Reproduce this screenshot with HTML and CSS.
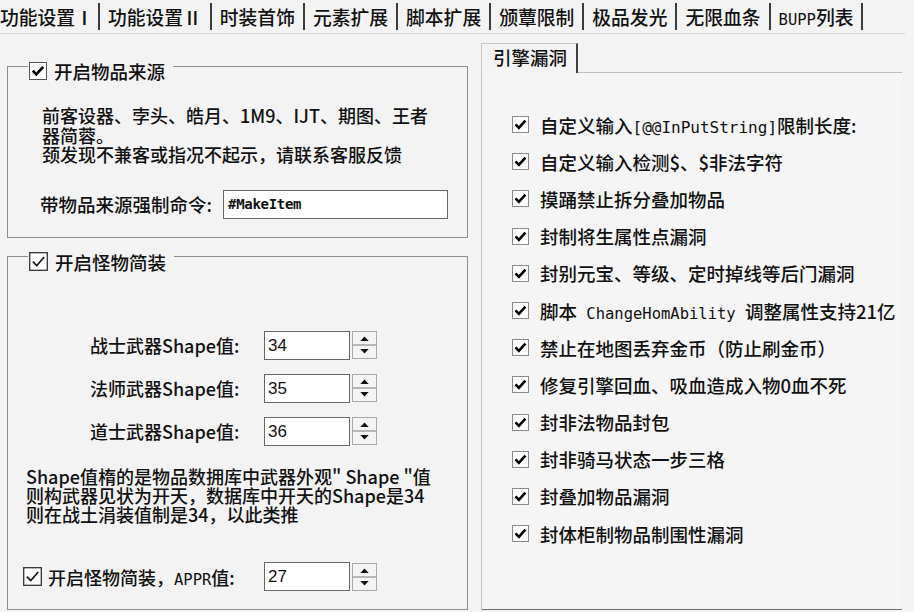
FILE: index.html
```html
<!DOCTYPE html>
<html lang="zh-CN">
<head>
<meta charset="utf-8">
<title>功能设置</title>
<link rel="stylesheet" href="styles.css">
</head>
<body>
<div class="tabs">
  <div class="tab first">功能设置Ⅰ</div>
  <div class="tab">功能设置Ⅱ</div>
  <div class="tab">时装首饰</div>
  <div class="tab">元素扩展</div>
  <div class="tab">脚本扩展</div>
  <div class="tab">颁蕈限制</div>
  <div class="tab">极品发光</div>
  <div class="tab">无限血条</div>
  <div class="tab"><span class="mono tabmono">BUPP</span>列表</div>
</div>

<div class="main">
  <div class="left">
    <fieldset class="group g1">
      <legend><span class="legend-in">
        <svg class="cb" width="18" height="18" viewBox="0 0 18 18"><rect x="0.5" y="0.5" width="17" height="17" fill="#fff" stroke="#555"/><path d="M3.8 8.8 L7.3 12.4 L14.2 4.8" fill="none" stroke="#000" stroke-width="2.7"/></svg>
        开启物品来源</span></legend>
      <div class="body">
        <p class="note">前客设器、孛头、皓月、1M9、IJT、期图、王者<br>器简蓉。<br>颈发现不兼客或指况不起示，请联系客服反馈</p>
        <div class="cmd-row">
          <span class="cmd-label">带物品来源强制命令:</span>
          <div class="field wide">#MakeItem</div>
        </div>
      </div>
    </fieldset>

    <fieldset class="group g2">
      <legend><span class="legend-in">
        <svg class="cb" width="19" height="19" viewBox="0 0 19 19"><rect x="0.7" y="0.7" width="17.6" height="17.6" fill="#fff" stroke="#333" stroke-width="1.3"/><path d="M3.8 9.6 L7.8 13.6 L15.2 5" fill="none" stroke="#111" stroke-width="1.6"/></svg>
        开启怪物简装</span></legend>
      <div class="body">
        <div class="shape-rows">
          <span class="lbl">战士武器Shape值:</span>
          <div class="spin-field">
            <div class="field num">34</div>
            <svg class="spin" width="25" height="28" viewBox="0 0 25 28"><rect x="0.5" y="0.5" width="24" height="27" fill="#f4f4f4" stroke="#a9a9a9"/><line x1="1" y1="14" x2="24" y2="14" stroke="#7a7a7a"/><path d="M8.3 10 L12.5 5.5 L16.7 10 Z" fill="#111"/><path d="M8.3 18 L12.5 22.5 L16.7 18 Z" fill="#111"/></svg>
          </div>
          <span class="lbl">法师武器Shape值:</span>
          <div class="spin-field">
            <div class="field num">35</div>
            <svg class="spin" width="25" height="28" viewBox="0 0 25 28"><rect x="0.5" y="0.5" width="24" height="27" fill="#f4f4f4" stroke="#a9a9a9"/><line x1="1" y1="14" x2="24" y2="14" stroke="#7a7a7a"/><path d="M8.3 10 L12.5 5.5 L16.7 10 Z" fill="#111"/><path d="M8.3 18 L12.5 22.5 L16.7 18 Z" fill="#111"/></svg>
          </div>
          <span class="lbl">道士武器Shape值:</span>
          <div class="spin-field">
            <div class="field num">36</div>
            <svg class="spin" width="25" height="28" viewBox="0 0 25 28"><rect x="0.5" y="0.5" width="24" height="27" fill="#f4f4f4" stroke="#a9a9a9"/><line x1="1" y1="14" x2="24" y2="14" stroke="#7a7a7a"/><path d="M8.3 10 L12.5 5.5 L16.7 10 Z" fill="#111"/><path d="M8.3 18 L12.5 22.5 L16.7 18 Z" fill="#111"/></svg>
          </div>
        </div>
        <p class="note2">Shape值楕的是物品数拥库中武器外观" Shape "值<br>则构武器见状为开天，数据库中开天的Shape是34<br>则在战土涓装值制是34，以此类推</p>
        <div class="appr-row">
          <span class="appr-label">
            <svg class="cb" width="19" height="19" viewBox="0 0 19 19"><rect x="0.7" y="0.7" width="17.6" height="17.6" fill="#fff" stroke="#333" stroke-width="1.3"/><path d="M3.8 9.6 L7.8 13.6 L15.2 5" fill="none" stroke="#111" stroke-width="1.6"/></svg>
            <span>开启怪物简装，<span class="mono appr">APPR</span>值:</span>
          </span>
          <div class="spin-field">
            <div class="field num">27</div>
            <svg class="spin" width="25" height="28" viewBox="0 0 25 28"><rect x="0.5" y="0.5" width="24" height="27" fill="#f4f4f4" stroke="#a9a9a9"/><line x1="1" y1="14" x2="24" y2="14" stroke="#7a7a7a"/><path d="M8.3 10 L12.5 5.5 L16.7 10 Z" fill="#111"/><path d="M8.3 18 L12.5 22.5 L16.7 18 Z" fill="#111"/></svg>
          </div>
        </div>
      </div>
    </fieldset>
  </div>

  <div class="right">
    <div class="subtabs">
      <div class="subtab">引擎漏洞</div>
      <div class="subtab-fill"></div>
    </div>
    <div class="panel">
      <ul class="checks">
        <li><svg class="cb" width="17" height="17" viewBox="0 0 17 17"><rect x="0.5" y="0.5" width="16" height="16" fill="#fff" stroke="#8a8a8a"/><path d="M3.5 8.3 L6.9 11.8 L13.4 4.6" fill="none" stroke="#000" stroke-width="2.6"/></svg><span>自定义输入<span class="mono m16">[@@InPutString]</span>限制长度:</span></li>
        <li><svg class="cb" width="17" height="17" viewBox="0 0 17 17"><rect x="0.5" y="0.5" width="16" height="16" fill="#fff" stroke="#8a8a8a"/><path d="M3.5 8.3 L6.9 11.8 L13.4 4.6" fill="none" stroke="#000" stroke-width="2.6"/></svg><span>自定义输入检测$、$非法字符</span></li>
        <li><svg class="cb" width="17" height="17" viewBox="0 0 17 17"><rect x="0.5" y="0.5" width="16" height="16" fill="#fff" stroke="#8a8a8a"/><path d="M3.5 8.3 L6.9 11.8 L13.4 4.6" fill="none" stroke="#000" stroke-width="2.6"/></svg><span>摸踊禁止拆分叠加物品</span></li>
        <li><svg class="cb" width="17" height="17" viewBox="0 0 17 17"><rect x="0.5" y="0.5" width="16" height="16" fill="#fff" stroke="#8a8a8a"/><path d="M3.5 8.3 L6.9 11.8 L13.4 4.6" fill="none" stroke="#000" stroke-width="2.6"/></svg><span>封制将生属性点漏洞</span></li>
        <li><svg class="cb" width="17" height="17" viewBox="0 0 17 17"><rect x="0.5" y="0.5" width="16" height="16" fill="#fff" stroke="#8a8a8a"/><path d="M3.5 8.3 L6.9 11.8 L13.4 4.6" fill="none" stroke="#000" stroke-width="2.6"/></svg><span>封别元宝、等级、定时掉线等后门漏洞</span></li>
        <li><svg class="cb" width="17" height="17" viewBox="0 0 17 17"><rect x="0.5" y="0.5" width="16" height="16" fill="#fff" stroke="#8a8a8a"/><path d="M3.5 8.3 L6.9 11.8 L13.4 4.6" fill="none" stroke="#000" stroke-width="2.6"/></svg><span>脚本<span class="mono m15"> ChangeHomAbility </span>调整属性支持21亿</span></li>
        <li><svg class="cb" width="17" height="17" viewBox="0 0 17 17"><rect x="0.5" y="0.5" width="16" height="16" fill="#fff" stroke="#8a8a8a"/><path d="M3.5 8.3 L6.9 11.8 L13.4 4.6" fill="none" stroke="#000" stroke-width="2.6"/></svg><span>禁止在地图丢弃金币（防止刷金币）</span></li>
        <li><svg class="cb" width="17" height="17" viewBox="0 0 17 17"><rect x="0.5" y="0.5" width="16" height="16" fill="#fff" stroke="#8a8a8a"/><path d="M3.5 8.3 L6.9 11.8 L13.4 4.6" fill="none" stroke="#000" stroke-width="2.6"/></svg><span>修复引擎回血、吸血造成入物0血不死</span></li>
        <li><svg class="cb" width="17" height="17" viewBox="0 0 17 17"><rect x="0.5" y="0.5" width="16" height="16" fill="#fff" stroke="#8a8a8a"/><path d="M3.5 8.3 L6.9 11.8 L13.4 4.6" fill="none" stroke="#000" stroke-width="2.6"/></svg><span>封非法物品封包</span></li>
        <li><svg class="cb" width="17" height="17" viewBox="0 0 17 17"><rect x="0.5" y="0.5" width="16" height="16" fill="#fff" stroke="#8a8a8a"/><path d="M3.5 8.3 L6.9 11.8 L13.4 4.6" fill="none" stroke="#000" stroke-width="2.6"/></svg><span>封非骑马状态一步三格</span></li>
        <li><svg class="cb" width="17" height="17" viewBox="0 0 17 17"><rect x="0.5" y="0.5" width="16" height="16" fill="#fff" stroke="#8a8a8a"/><path d="M3.5 8.3 L6.9 11.8 L13.4 4.6" fill="none" stroke="#000" stroke-width="2.6"/></svg><span>封叠加物品漏洞</span></li>
        <li><svg class="cb" width="17" height="17" viewBox="0 0 17 17"><rect x="0.5" y="0.5" width="16" height="16" fill="#fff" stroke="#8a8a8a"/><path d="M3.5 8.3 L6.9 11.8 L13.4 4.6" fill="none" stroke="#000" stroke-width="2.6"/></svg><span>封体柜制物品制围性漏洞</span></li>
      </ul>
    </div>
  </div>
</div>
</body>
</html>
```

FILE: styles.css
```css
html, body {
  margin: 0;
  padding: 0;
}
body {
  width: 914px;
  height: 612px;
  overflow: hidden;
  background: #f3f3f3;
  color: #111;
  font-family: "Noto Sans CJK SC", "Noto Sans", sans-serif;
  font-weight: 500;
}

.mono {
  font-family: "DejaVu Sans Mono", "Liberation Mono", monospace;
  font-weight: normal;
}

/* top tab strip */
.tabs {
  display: flex;
  align-items: center;
  width: 905px;
  height: 33px;
  border-bottom: 1px solid #d6d6d6;
  font-size: 18.8px;
  overflow: hidden;
}
.tab {
  height: 27px;
  line-height: 27px;
  padding: 0 8px;
  border-right: 2px solid #3c3c3c;
  white-space: nowrap;
  flex: none;
}
.tab.first {
  padding-left: 0;
  padding-right: 4px;
}
.tabmono {
  font-size: 15.5px;
}

/* main two-column area */
.main {
  display: grid;
  grid-template-columns: 461px 421px;
  column-gap: 13px;
  padding-left: 7px;
}
.left {
  margin-top: 17px;
}

.group {
  margin: 0;
  padding: 0;
  border: 1px solid #8d8d8d;
  min-width: 0;
}
.group legend {
  margin-left: 20px;
  padding: 10px 8px 0 1px;
  line-height: 20px;
  font-size: 18.5px;
}
.legend-in {
  display: flex;
  align-items: center;
  gap: 7px;
  white-space: nowrap;
}
.cb {
  display: block;
  flex: none;
}

.g1 .body {
  padding: 25px 18px 18px 34px;
}
.note {
  margin: 0;
  font-size: 18px;
  line-height: 19.5px;
  white-space: nowrap;
}
.cmd-row {
  display: flex;
  align-items: center;
  margin: 25px 0 0 -2px;
  height: 29px;
}
.cmd-label {
  width: 183px;
  font-size: 18.5px;
  white-space: nowrap;
  flex: none;
}
.field {
  box-sizing: border-box;
  height: 29px;
  background: #fff;
  border: 1px solid #666;
}
.wide {
  width: 225px;
  padding-left: 4px;
  font-family: "DejaVu Sans Mono", monospace;
  font-weight: bold;
  font-size: 14px;
  letter-spacing: -0.3px;
  line-height: 27px;
}

.g2 {
  margin-top: 4px;
}
.g2 .body {
  padding: 59px 10px 18px 0;
}
.shape-rows {
  display: grid;
  grid-template-columns: 174px auto;
  row-gap: 14px;
  align-items: center;
  padding-left: 82px;
}
.lbl {
  font-size: 18px;
  white-space: nowrap;
}
.spin-field {
  display: flex;
  align-items: center;
  gap: 2px;
}
.num {
  width: 86px;
  padding-left: 3px;
  font-family: "Liberation Sans", Arial, sans-serif;
  font-weight: normal;
  font-size: 17px;
  line-height: 27px;
  color: #111;
}
.spin {
  display: block;
  flex: none;
}
.note2 {
  margin: 21px 0 0 0;
  padding-left: 18px;
  font-size: 18px;
  line-height: 19px;
  white-space: nowrap;
}
.appr-row {
  display: grid;
  grid-template-columns: 241px auto;
  align-items: center;
  margin-top: 38.5px;
  padding-left: 15px;
}
.appr-label {
  display: flex;
  align-items: center;
  gap: 6px;
  font-size: 18px;
  white-space: nowrap;
}
.appr {
  font-size: 15.5px;
}

/* right column */
.right {
  margin-top: 9px;
  display: flex;
  flex-direction: column;
}
.subtabs {
  display: flex;
  height: 30px;
}
.subtab {
  box-sizing: border-box;
  height: 30px;
  padding: 0 9px 3px 11px;
  line-height: 26px;
  border-top: 1px solid #c6c6c6;
  border-left: 1px solid #c6c6c6;
  border-right: 2px solid #404040;
  font-size: 18.5px;
  white-space: nowrap;
}
.subtab-fill {
  flex: 1;
  border-bottom: 1px solid #bdbdbd;
}
.panel {
  flex: 1;
  border-left: 1px solid #c6c6c6;
  border-bottom: 1px solid #6e6e6e;
  padding: 33px 0 0 30px;
  background: #f5f5f5;
}
.checks {
  list-style: none;
  margin: 0;
  padding: 0;
}
.checks li {
  display: flex;
  align-items: center;
  gap: 11px;
  height: 37.2px;
  font-size: 18.5px;
  white-space: nowrap;
}
.m16 {
  font-size: 16px;
}
.m15 {
  font-size: 15.5px;
}
```
